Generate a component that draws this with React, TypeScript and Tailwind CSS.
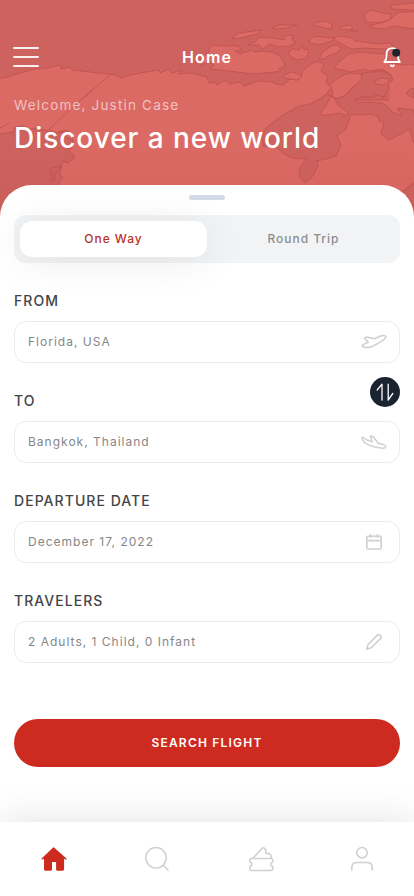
import React, { useState } from 'react';

interface FieldProps {
  label: string;
  value: string;
  icon: React.ReactNode;
}

const Field: React.FC<FieldProps> = ({ label, value, icon }) => (
  <div className="h-[100px]">
    <div className="h-[31px] text-sm font-medium leading-[21px] tracking-[1.05px] text-[#444446]">{label}</div>
    <div className="flex h-[42px] items-center justify-between rounded-xl border border-[#ebebed] pl-[13px] pr-[12px]">
      <span className="text-xs tracking-[1.01px] text-[#868688]">{value}</span>
      {icon}
    </div>
  </div>
);

const WorldMap = () => (
  <svg className="absolute inset-0" width="414" height="224" viewBox="0 0 414 224" stroke="#bd4e4c" strokeWidth="0.7" strokeLinejoin="round">
    <g fill="#db6a64">
      <path d="M-2 79L8 77L20 73L35 69L48 68L58 65L62 67L61 69L70 67L72 70L82 71L98 73L110 74L116 75L121 78L130 75L140 73L159 70L160 73L169 69L172 73L182 70L178 74L190 73L207 77L209 83L215 82L217 85L225 80L230 84L240 82L244 86L258 81L273 82L275 84L283 85L290 79L298 80L302 76L302 72L308 66L315 62L320 62L324 65L321 71L328 76L326 82L329 86L335 80L344 75L350 73L361 74L362 79L352 88L346 95L337 99L332 96L333 92L331 87L327 94L319 100H416V226H-2Z" />
      <path d="M209 48L213 45L227 46L239 46L241 50L235 51L239 54L252 50L254 52L263 51L271 52L279 55L283 61L285 66L279 69L281 71L275 72L264 73L256 74L245 73L229 71L210 69L214 65L211 63L215 61L203 64L198 66L195 62L202 58L209 52Z" />
      <path d="M248 45L255 42L260 37L273 38L284 40L284 36L293 35L292 40L296 42L290 46L278 47L270 44L263 49L259 45Z" />
      <path d="M232 38L239 33L261 30L258 34L245 37L235 39Z" />
      <path d="M272 28L279 25L297 25L286 28L276 29ZM313 26L317 22L325 21L332 24L331 29L324 28L318 26ZM339 27L350 25L353 28L350 30L340 29ZM351 31L358 30L357 32Z" />
      <path d="M288 52L293 49L299 50L303 46L304 50L308 49L308 53L306 58L298 60L291 57ZM309 40L315 36L330 38L334 37L332 41L319 45L310 43Z" />
      <path d="M333 38L339 36L352 38L355 41L378 44L390 43L393 46L387 49L364 48L352 49L345 46L338 42ZM319 59L322 52L331 46L336 45L342 48L337 53L328 56L324 59Z" />
      <path stroke="none" d="M390 70L416 66V150H388Z" />
      <path d="M416 66L410 64L404 65L389 63L385 59L385 54L372 53L359 52L349 54L340 61L334 68L343 70L350 72L364 69L369 71L382 69L390 74L393 80L388 84L389 89L382 99" />
      <path d="M364 14L371 10L383 13L391 14L391 19L382 23L366 22ZM369 26L379 23L389 20L399 12L416 12V29L392 26L386 29L374 28ZM390 5L403 4L416 3V10L392 9ZM283 76L291 72L299 74L302 77L297 80L290 79L284 78Z" />
    </g>
    <g fill="#cd625e">
      <path d="M337 99L346 95L352 88L361 80L362 73L382 71L391 75L393 80L388 84L389 89L384 97L374 94L374 97L360 97L355 100L357 103L367 102L382 103L387 106L392 112L402 116L397 108L414 110L416 145L413 141L409 128L403 133L389 140L381 134L384 122L379 121L379 117L372 114L357 115L351 114L348 122L346 129L337 136L341 145L336 156L326 159L317 161L318 166L313 176L305 183L299 176L300 168L306 159L292 158L282 153L274 145L264 147L261 136L267 127L280 117L292 110L299 106L310 104L321 98L327 94Z" />
      <path d="M-2 134L13 132L15 127L24 126L28 129L36 128L49 131L54 133L67 130L69 132L64 136L73 140L72 148L68 149L75 157L68 163L63 161L61 168L60 174L63 178L59 181L60 190V226H-2Z" />
      <path d="M52 180L51 168L62 166L55 173L54 181Z" />
      <path d="M402 192L408 187L416 181V224H402Z" />
    </g>
    <path fill="#db6a64" d="M321 112L325 107L331 96L334 98L339 106L348 112L347 116L340 113L326 115L323 116ZM374 82L380 78L390 79L384 85L377 84Z" />
    <path fill="none" d="M111 74L81 100M92 90L49 129L56 133L65 132M0 128L9 123" />
    <path fill="#cd625e" d="M406 93L411 88L414 89V98L409 96Z" />
  </svg>
);

const PlaneUp = () => (
  <svg width="26" height="18" viewBox="0 0 26 18" fill="none" stroke="#cfd0d4" strokeWidth="1.5" strokeLinecap="round" strokeLinejoin="round">
    <path d="M7.2 9.2L3.4 5.2L5.8 4L13.4 5.8L18.4 3.5C21.4 2.3 24.8 2.1 24.8 3.9C24.8 5.8 21.6 7.5 18.5 9.3L14.2 12C9.6 14.6 4.7 15.3 1.4 13.5C0.2 12.5 2.7 11.1 7.2 9.2Z" />
  </svg>
);

const PlaneDown = () => (
  <svg width="26" height="18" viewBox="0 0 26 18" fill="none" stroke="#cfd0d4" strokeWidth="1.5" strokeLinecap="round" strokeLinejoin="round">
    <path d="M5.9 7L2.1 4.4C1.1 3.8 0.6 4.7 1.1 6C2.7 10.3 7.2 12.4 14 14L20.9 15.2C23.4 15.5 25 14.7 24.6 13.3C24.3 11.9 21.3 11.1 17.2 10.3L12.4 3.7L9.3 3L11.2 8.7L5.9 7Z" />
  </svg>
);

const CalendarIcon = () => (
  <svg className="mr-[4px]" width="18" height="18" viewBox="0 0 18 18" fill="none" stroke="#cfd0d4" strokeWidth="1.6" strokeLinecap="round">
    <rect x="1.8" y="3.2" width="14.4" height="12.8" rx="1" />
    <path d="M2 7.6H16M5.5 1.5V4.5M12.5 1.5V4.5" />
  </svg>
);

const PencilIcon = () => (
  <svg className="mr-[4px]" width="18" height="18" viewBox="0 0 18 18" fill="none" stroke="#cfd0d4" strokeWidth="1.6" strokeLinecap="round" strokeLinejoin="round">
    <path d="M1.7 16.2L3 11.5L12.4 2.1C14.2 0.6 17.4 3.2 15.7 5.4L6.2 14.7L1.7 16.2Z" />
  </svg>
);

const navIcons = [
  {
    name: 'Home',
    icon: (
      <svg width="28" height="28" viewBox="0 0 28 28" fill="#cd2b20">
        <path d="M14 1.5L26.2 12.2C27 13 26 14.1 25.2 13.4L24.1 12.4V22.9C24.1 24.1 23.4 24.7 22.4 24.7H17.5C16.5 24.7 16.1 24.1 16.1 23.2V15.9H12V23.2C12 24.1 11.5 24.7 10.6 24.7H5.7C4.6 24.7 4 24 4 22.9V12.4L2.9 13.4C2.1 14.1 1.1 13 1.9 12.2L12.6 2C13.3 1.3 13.5 1.1 14 1.5Z" />
      </svg>
    ),
  },
  {
    name: 'Search',
    icon: (
      <svg width="28" height="28" viewBox="0 0 28 28" fill="none" stroke="#cfd0d4" strokeWidth="1.5" strokeLinecap="round">
        <circle cx="13" cy="11.8" r="10.2" />
        <path d="M20.2 19.2L25 24" />
      </svg>
    ),
  },
  {
    name: 'Tickets',
    icon: (
      <svg className="ml-[3px] -mr-[3px]" width="28" height="28" viewBox="0 0 28 28" fill="none" stroke="#cfd0d4" strokeWidth="1.6" strokeLinejoin="round">
        <path d="M2.9 12.5H23.3C24.3 12.5 24.7 13 24.7 13.8V16C21.8 16.8 21.8 19.7 24.7 20.5V22.9C24.7 23.9 24.2 24.5 23.2 24.5H3.2C2.3 24.5 1.9 23.9 1.9 23V20.5C4.7 19.7 4.7 16.8 1.9 16V13.6C1.9 12.8 2.2 12.5 2.9 12.5Z" />
        <path d="M5 12.2L13.8 2.8C14.8 1.6 15.7 1.5 16.5 2.4L17.9 4C17 6.6 18 8 20.9 7.5L22.7 9C23.3 9.6 23.3 10.9 22.9 12.3" />
      </svg>
    ),
  },
  {
    name: 'Profile',
    icon: (
      <svg width="28" height="28" viewBox="0 0 28 28" fill="none" stroke="#cfd0d4" strokeWidth="1.6" strokeLinecap="round">
        <circle cx="14" cy="6.7" r="5.2" />
        <path d="M3.8 24V21.5C3.8 18.2 6 16.5 9 16.5H19C22 16.5 24.2 18.2 24.2 21.5V24" />
      </svg>
    ),
  },
];

const App: React.FC = () => {
  const [trip, setTrip] = useState('One Way');

  return (
    <div className="relative flex h-[896px] w-[414px] flex-col overflow-hidden bg-white font-['Inter',sans-serif]">
      <header className="relative -mb-[39px] h-[224px] shrink-0 bg-[#cd625e] text-white">
        <WorldMap />
        <div className="absolute inset-0 bg-gradient-to-b from-transparent from-60% to-[#b8443f]/15" />
        <div className="relative flex h-[96px] items-end px-[13px] pb-[25px]">
          <button aria-label="Menu" className="mb-[4px] flex w-[26px] flex-col gap-[7px]">
            <span className="h-[2px] rounded-full bg-white/90" />
            <span className="h-[2px] rounded-full bg-white/90" />
            <span className="h-[2px] rounded-full bg-white/90" />
          </button>
          <h1 className="flex-1 pr-[7px] text-center text-base font-semibold leading-[28px] tracking-[1.15px]">Home</h1>
          <button aria-label="Notifications" className="-mr-[3px] mb-[2px]">
            <svg width="22" height="24" viewBox="0 0 22 24" fill="none" stroke="white" strokeWidth="1.8" strokeLinejoin="round" strokeLinecap="round">
              <path d="M2.4 17H17.9C16.5 15.5 15.9 14 15.9 11V9.2C15.9 5.6 13.7 3.2 10.2 3.2S4.5 5.6 4.5 9.2V11C4.5 14 3.9 15.5 2.4 17Z" />
              <path d="M8.8 20.3C9.4 21.6 11.2 21.6 11.8 20.3" />
              <circle cx="14.2" cy="7.8" r="4" fill="#1c2430" stroke="none" />
            </svg>
          </button>
        </div>
        <div className="relative pl-[14px]">
          <p className="text-[13.5px] leading-[18px] tracking-[1.18px] text-white/60">Welcome, Justin Case</p>
          <h2 className="mt-[5px] text-[28px] font-medium leading-[38px] tracking-[0.95px]">Discover a new world</h2>
        </div>
      </header>

      <main className="relative flex flex-1 flex-col rounded-t-[32px] bg-white px-[14px]">
        <div className="mx-auto mt-[10px] h-[5px] w-9 shrink-0 rounded-full bg-[#d3dbe7]" />
        <div className="mt-[15px] flex h-12 shrink-0 gap-[3px] rounded-xl bg-[#f2f3f5] p-[6px] pr-[3px] text-xs font-medium tracking-[0.97px]">
          {['One Way', 'Round Trip'].map((name) => (
            <button
              key={name}
              onClick={() => setTrip(name)}
              className={
                trip === name
                  ? 'flex-1 rounded-xl bg-white text-[#b93029] shadow-[0_4px_40px_rgba(0,0,0,0.08)]'
                  : 'flex-1 rounded-xl text-[#8c8c8f]'
              }
            >
              {name}
            </button>
          ))}
        </div>

        <div className="relative mt-[27px]">
          <Field label="FROM" value="Florida, USA" icon={<PlaneUp />} />
          <Field label="TO" value="Bangkok, Thailand" icon={<PlaneDown />} />
          <Field label="DEPARTURE DATE" value="December 17, 2022" icon={<CalendarIcon />} />
          <Field label="TRAVELERS" value="2 Adults, 1 Child, 0 Infant" icon={<PencilIcon />} />
          <button aria-label="Swap" className="absolute right-0 top-[87px] flex h-[30px] w-[30px] items-center justify-center rounded-full bg-[#1a2430]">
            <svg width="30" height="30" viewBox="0 0 30 30" fill="none" stroke="white" strokeWidth="1.3" strokeLinecap="round" strokeLinejoin="round">
              <path d="M7.2 13L12 7.2V23M18.2 7.2V23L22.8 16.5" />
            </svg>
          </button>
        </div>

        <button className="mt-[29px] h-12 shrink-0 rounded-full bg-[#cd2b20] text-xs font-semibold tracking-[1.2px] text-white">
          SEARCH FLIGHT
        </button>
      </main>

      <nav className="relative flex h-[74px] shrink-0 items-center bg-white shadow-[0_0_40px_rgba(0,0,0,0.12)]">
        <div className="flex w-full items-center justify-between pl-[40px] pr-[38px] pt-px">
          {navIcons.map((item) => (
            <button key={item.name} aria-label={item.name}>
              {item.icon}
            </button>
          ))}
        </div>
      </nav>
    </div>
  );
};

export default App;
